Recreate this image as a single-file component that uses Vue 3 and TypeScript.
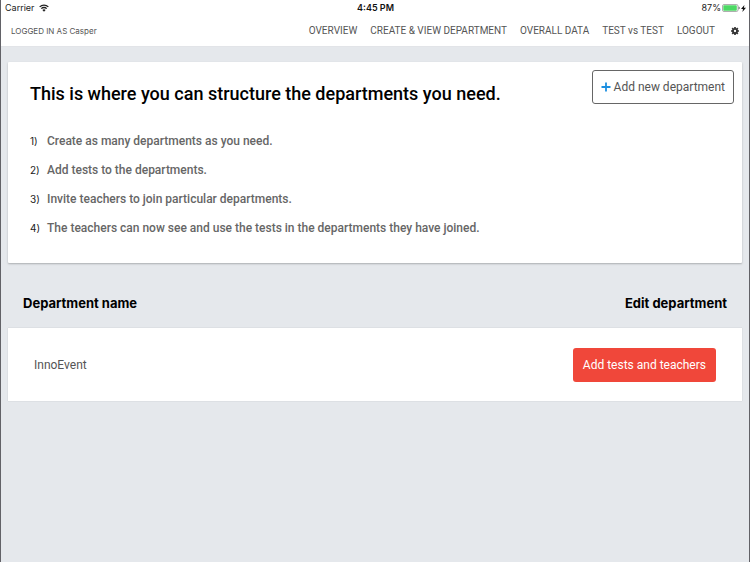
<script setup lang="ts">
interface NavItem {
  label: string
  href: string
}

interface Department {
  id: number
  name: string
}

const userName = 'Casper'
const batteryLevel = 87

const navItems: NavItem[] = [
  { label: 'OVERVIEW', href: '#overview' },
  { label: 'CREATE & VIEW DEPARTMENT', href: '#departments' },
  { label: 'OVERALL DATA', href: '#data' },
  { label: 'TEST vs TEST', href: '#compare' },
  { label: 'LOGOUT', href: '#logout' },
]

const steps: string[] = [
  'Create as many departments as you need.',
  'Add tests to the departments.',
  'Invite teachers to join particular departments.',
  'The teachers can now see and use the tests in the departments they have joined.',
]

const departments: Department[] = [{ id: 1, name: 'InnoEvent' }]
</script>

<template>
  <div class="screen">
    <header class="top">
      <div class="status">
        <span class="carrier">
          Carrier
          <svg class="wifi" viewBox="0 0 20 16" aria-hidden="true">
            <g fill="none" stroke="#222" stroke-width="2.6">
              <path d="M1.3 5.8a12.3 12.3 0 0 1 17.4 0" />
              <path d="M4.6 9.3a7.6 7.6 0 0 1 10.8 0" />
            </g>
            <path d="M10 15.4 6.7 11.9a4.7 4.7 0 0 1 6.6 0z" fill="#222" />
          </svg>
        </span>
        <span class="clock">4:45 PM</span>
        <span class="battery">
          {{ batteryLevel }}%
          <svg class="cell" viewBox="0 0 36 16" aria-hidden="true">
            <rect x="1" y="1" width="31" height="14" rx="3" fill="#fff" stroke="#8b8b8b" stroke-width="1.4" />
            <rect x="2.6" y="2.6" width="27" height="10.8" rx="1.4" fill="#4cd964" />
            <path d="M33.4 5.2c2.4.8 2.4 4.8 0 5.6z" fill="#333" />
          </svg>
          <svg class="bolt" viewBox="0 0 10 14" aria-hidden="true">
            <path d="M6.8 0 0 8.2h4L2.8 14 10 5.6H5.8z" fill="#111" />
          </svg>
        </span>
      </div>
      <div class="bar">
        <span class="user">LOGGED IN AS {{ userName }}</span>
        <nav class="nav">
          <a v-for="item in navItems" :key="item.href" :href="item.href">{{ item.label }}</a>
          <button class="settings" type="button" aria-label="Settings">
            <svg viewBox="0 0 16 16" aria-hidden="true">
              <circle cx="8" cy="8" r="4.2" fill="none" stroke="#333" stroke-width="3.8" />
              <path
                d="M8 0v3M8 13v3M0 8h3M13 8h3M2.4 2.4l2 2M11.6 11.6l2 2M2.4 13.6l2-2M11.6 4.4l2-2"
                stroke="#333"
                stroke-width="3.4"
              />
            </svg>
          </button>
        </nav>
      </div>
    </header>

    <main class="content">
      <section class="intro">
        <div class="intro-head">
          <h1>This is where you can structure the departments you need.</h1>
          <button class="add" type="button">
            <svg class="plus" viewBox="0 0 10 10" aria-hidden="true">
              <path d="M5 .5v9M.5 5h9" stroke="#1c8fe0" stroke-width="1.8" />
            </svg>
            Add new department
          </button>
        </div>
        <ol class="steps">
          <li v-for="(step, index) in steps" :key="step">
            <span class="number">{{ index + 1 }})</span>
            <span>{{ step }}</span>
          </li>
        </ol>
      </section>

      <table class="departments">
        <thead>
          <tr>
            <th scope="col">Department name</th>
            <th scope="col" class="action">Edit department</th>
          </tr>
        </thead>
        <tbody>
          <tr v-for="department in departments" :key="department.id">
            <td>{{ department.name }}</td>
            <td class="action">
              <button class="edit" type="button">Add tests and teachers</button>
            </td>
          </tr>
        </tbody>
      </table>
    </main>
  </div>
</template>

<style>
body {
  background: #e5e8ec;
}
</style>

<style scoped>
.screen {
  box-sizing: border-box;
  min-height: 100vh;
  border-left: 1px solid #626267;
  border-right: 1px solid #626267;
  background: #e5e8ec;
  color: #555;
  font-family: Roboto, "Liberation Sans", sans-serif;
  font-size: 12px;
  line-height: 16px;
}

button {
  font: inherit;
  cursor: pointer;
}

.top {
  background: #fff;
  border-bottom: 1px solid #e2e4e8;
}

.status {
  display: grid;
  grid-template-columns: 1fr auto 1fr;
  align-items: center;
  padding: 0 3px 0 4px;
  color: #222;
  font-family: Inter, "Liberation Sans", sans-serif;
  font-size: 9px;
}

.carrier,
.battery {
  display: flex;
  align-items: center;
  gap: 4px;
}

.clock {
  color: #111;
  font-weight: 600;
}

.battery {
  justify-content: flex-end;
  gap: 1px;
}

.wifi {
  width: 10px;
  height: 8px;
}

.cell {
  width: 18px;
  height: 8px;
}

.bolt {
  width: 5px;
  height: 7px;
}

.bar {
  display: flex;
  align-items: center;
  justify-content: space-between;
  height: 30px;
  padding: 0 10px;
}

.user {
  font-family: Inter, "Liberation Sans", sans-serif;
  font-size: 8px;
}

.nav {
  display: flex;
  align-items: center;
  gap: 13px;
  font-size: 10px;
}

.nav a {
  color: #555;
  text-decoration: none;
}

.settings {
  display: flex;
  margin-left: 3px;
  padding: 0;
  border: 0;
  background: none;
}

.settings svg {
  width: 8px;
  height: 8px;
}

.content {
  padding: 15px 7px 0;
}

.intro {
  padding: 8px 8px 24px 22px;
  border-radius: 1px;
  background: #fff;
  box-shadow: 0 1px 2px rgba(0, 0, 0, 0.25);
}

.intro-head {
  display: flex;
  align-items: flex-start;
  justify-content: space-between;
}

h1 {
  margin: 0;
  padding-top: 12px;
  color: #000;
  font-size: 18px;
  font-weight: 500;
  line-height: 24px;
}

.add {
  display: flex;
  align-items: center;
  gap: 3px;
  height: 34px;
  padding: 0 8px;
  border: 1px solid #666;
  border-radius: 3px;
  background: #fff;
  color: #555;
}

.plus {
  width: 10px;
  height: 10px;
}

.steps {
  display: grid;
  gap: 13px;
  margin: 0;
  padding: 27px 0 3px;
  color: #666;
  font-weight: 500;
  list-style: none;
}

.steps li {
  display: flex;
  align-items: center;
}

.number {
  width: 17px;
  color: #222;
  font-family: Inter, "Liberation Sans", sans-serif;
  font-size: 10px;
  font-weight: 400;
}

.departments {
  width: 100%;
  border-collapse: collapse;
}

th {
  height: 65px;
  padding: 14px 15px 0;
  box-sizing: border-box;
  color: #000;
  font-family: Inter, "Liberation Sans", sans-serif;
  font-size: 13px;
  font-weight: 700;
  text-align: left;
}

tbody tr {
  background: #fff;
  box-shadow: 0 0 1px rgba(0, 0, 0, 0.2);
}

td {
  height: 73px;
  padding: 0 26px;
}

.action {
  text-align: right;
}

.edit {
  height: 34px;
  padding: 0 10px;
  border: 0;
  border-radius: 3px;
  background: #f0473a;
  color: #fff;
}
</style>
